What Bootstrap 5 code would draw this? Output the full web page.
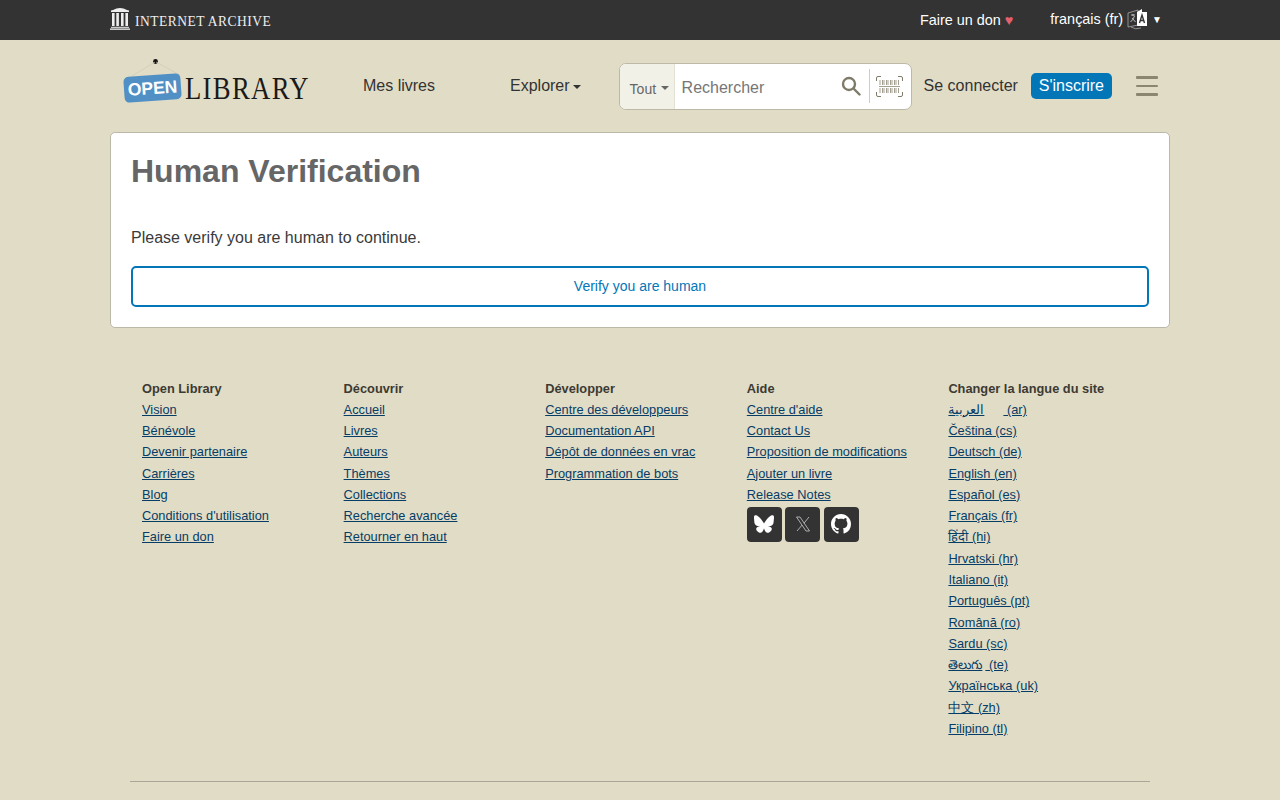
<!DOCTYPE html>
<html lang="fr">
<head>
    <meta charset="UTF-8">
    <meta name="viewport" content="width=device-width, initial-scale=1.0">
    <title>Human Verification | Open Library</title>
    <link href="https://cdn.jsdelivr.net/npm/bootstrap@5.3.0/dist/css/bootstrap.min.css" rel="stylesheet" />
    <style>
        body { background: #e1dcc5; color: #333; font-family: "Liberation Sans", Arial, sans-serif; font-size: 16px; }
        .page-wrap { width: 1060px; margin: 0 auto; }
        .ia-bar { background: #333; height: 40px; color: #fff; }
        .ia-bar .page-wrap { height: 40px; }
        .ia-mark { margin-top: -4px; }
        .ia-name { font-family: "Liberation Serif", serif; font-size: 15px; letter-spacing: .55px; color: #eee; margin-left: 5px; padding-top: 2px; transform: scaleX(.9); transform-origin: left center; white-space: nowrap; }
        .ia-link { font-size: 14.4px; color: #fff; text-decoration: none; margin-top: 1px; }
        .ia-heart { color: #e4606d; }
        .lang-pick { font-size: 14.4px; margin-left: 37px; margin-right: 8px; margin-top: -1px; }
        .lang-icon { margin-left: 4px; }
        .lang-arrow { font-size: 10px; margin-left: 4px; }
        .ol-head { height: 92px; }
        .ol-logo { width: 203px; height: 60px; margin-left: 13px; position: relative; flex: none; }
        .ol-sign { position: absolute; left: 1px; top: 19px; width: 57px; height: 26px; background: #5090c5; border-radius: 5px; transform: rotate(-4deg); color: #fff; font-weight: 700; font-size: 17.5px; line-height: 26px; text-align: center; }
        .ol-word { position: absolute; left: 62px; top: 15px; font-family: "Liberation Serif", serif; font-size: 30.5px; letter-spacing: 1.5px; color: #1a1a1a; line-height: 36px; transform: scaleX(.875); transform-origin: left center; }
        .ol-hook { position: absolute; left: 0; top: 3px; }
        .head-link { color: #333; text-decoration: none; }
        .search-box { width: 293px; height: 47px; border: 1px solid #bdb9a6; border-radius: 7px; background: #fff; margin-left: 38px; overflow: hidden; flex: none; }
        .search-scope { width: 55px; background: #f2f1e8; border-right: 1px solid #e4e2d5; color: #666; font-size: 14px; padding: 6px 0 0 10px; }
        .search-scope::after { content: ""; display: inline-block; border-top: 4px solid currentColor; border-left: 4px solid transparent; border-right: 4px solid transparent; margin: -3px 0 0 5px; }
        .caret-down::after { content: ""; display: inline-block; border-top: 4px solid currentColor; border-left: 4px solid transparent; border-right: 4px solid transparent; vertical-align: middle; margin-left: 3px; }
        .search-input { border: 0; outline: 0; flex: 1; min-width: 0; padding: 3px 0 0 7px; font-size: 16px; background: transparent; color: #333; }
        .search-input::placeholder { color: #767676; opacity: 1; }
        .search-sep { width: 1px; height: 34px; background: #ccc; margin: 0 6px 0 8px; }
        .signup { background: #0376b8; color: #fff; border: 0; border-radius: 5px; height: 26px; width: 81px; padding: 0; font-size: 16px; line-height: 26px; }
        .signup:hover { background: #0376b8; color: #fff; }
        .burger { width: 22px; margin-left: 24px; }
        .burger span { display: block; height: 2.500px; background: #8a8670; margin: 6px 0; border-radius: 1px; }
        .verify-card { border: 1px solid #bbb8a8; border-radius: 5px; height: 196px; padding: 20px; margin-top: 0; }
        .verify-card h1 { font-size: 32px; font-weight: 700; color: #666; line-height: 37px; margin: 0 0 39px; }
        .verify-card p { font-size: 16px; line-height: 18px; margin: 0 0 20px; color: #3a3a3a; }
        .verify-btn { display: block; width: 100%; height: 41px; border: 2px solid #0376b8; border-radius: 5px; background: #fff; color: #0376b8; font-size: 14px; padding: 0; margin-top: -1px; }
        .verify-btn:hover { background: #fff; color: #0376b8; border-color: #0376b8; }
        .foot { width: 1020px; margin: 49.47px auto 0; }
        .foot-cols { padding-left: 12px; display: grid; grid-template-columns: repeat(5, 201.6px); font-size: 12.8px; line-height: 21.28px; }
        .foot-cols h2 { font-size: 12.8px; font-weight: 700; line-height: 21.28px; margin: 0 0 -.6px; padding-top: .6px; color: #3c3a33; }
        .foot-cols a { color: #063d66; }
        .foot-cols ul { margin: 0; padding: 0; list-style: none; }
        .social-row { margin-top: 1.500px; }
        .social { width: 35px; height: 35px; background: #333; border-radius: 4px; margin-right: 3.500px; }
        .arabic-name { padding-right: 19px; }
        .telugu-name { padding-right: 3px; }
        .foot-rule { border: 0; border-top: 1px solid #aaa79a; opacity: 1; margin: 41.900px 0 30px; }
    </style>
</head>
<body>
    <div class="ia-bar">
        <div class="page-wrap d-flex align-items-center justify-content-between">
            <div class="d-flex align-items-center">
                <svg class="ia-mark" width="20" height="23" viewBox="0 0 20 23" fill="#eee" aria-hidden="true">
                    <path d="M3 3 Q10 -1 17 3 L19 3.500 V5 H1 V3.500 Z"/>
                    <rect x="2" y="6" width="2.600" height="13"/>
                    <rect x="6.300" y="6" width="2.600" height="13"/>
                    <rect x="11" y="6" width="2.600" height="13"/>
                    <rect x="15.400" y="6" width="2.600" height="13"/>
                    <rect x="1" y="19.800" width="18" height="1"/>
                    <rect x="0" y="21.500" width="20" height="1.300"/>
                </svg>
                <span class="ia-name">INTERNET ARCHIVE</span>
            </div>
            <div class="d-flex align-items-center">
                <a class="ia-link" href="#">Faire un don <span class="ia-heart">♥</span></a>
                <span class="lang-pick d-flex align-items-center">français (fr)
                    <svg class="lang-icon" width="21" height="22" viewBox="0 0 21 22" aria-hidden="true">
                        <path d="M1 5 L11 2 V17 L1 19 Z" fill="none" stroke="#aaa" stroke-width=".8"/>
                        <path d="M10 4 L15 1 V4 H20 V18 H10 Z" fill="#fff"/>
                        <path d="M12.500 15 L15 7 L17.500 15 M13.400 12.500 H16.600" fill="none" stroke="#333" stroke-width="1.400"/>
                        <path d="M4 7 H8 M6 6 V8 M7.500 8 Q6 12 3.500 14 M5 10 L8.500 14" fill="none" stroke="#ccc" stroke-width=".9"/>
                        <path d="M4 19 Q8 22 14 20" fill="none" stroke="#aaa" stroke-width=".8"/>
                    </svg>
                    <span class="lang-arrow">▼</span>
                </span>
            </div>
        </div>
    </div>

    <div class="page-wrap">
        <header class="ol-head d-flex align-items-center">
            <a class="ol-logo d-block text-decoration-none" href="#">
                <svg class="ol-hook" width="70" height="40" viewBox="0 0 70 40" aria-hidden="true">
                    <circle cx="32.500" cy="2.500" r="2.400" fill="#111"/>
                    <path d="M32 3 L9 17 M33 3 L57 16" stroke="#cfcab4" stroke-width=".7" fill="none"/>
                </svg>
                <span class="ol-sign">OPEN</span>
                <span class="ol-word">LIBRARY</span>
            </a>
            <a class="head-link" style="margin-left:37px" href="#">Mes livres</a>
            <a class="head-link caret-down" style="margin-left:75px" href="#">Explorer</a>
            <form class="search-box d-flex align-items-stretch" onsubmit="return false">
                <div class="search-scope d-flex align-items-center text-nowrap">Tout</div>
                <input class="search-input" type="text" placeholder="Rechercher">
                <div class="d-flex align-items-center">
                    <svg width="20" height="20" viewBox="0 0 20 20" fill="none" stroke="#7f7b69" stroke-width="2.400" aria-hidden="true">
                        <circle cx="8" cy="8" r="6"/>
                        <path d="M12.500 12.500 L18.500 18.500" stroke-linecap="round"/>
                    </svg>
                    <div class="search-sep"></div>
                    <svg class="me-2" width="27" height="21" viewBox="0 0 27 21" fill="none" aria-hidden="true">
                        <path d="M.5 5 V2 Q.5 .5 2 .5 H5 M22 .5 H25 Q26.500 .5 26.500 2 V5 M.5 16 V19 Q.5 20.500 2 20.500 H5 M22 20.500 H25 Q26.500 20.500 26.500 19 V16" stroke="#7f7b69"/>
                        <path d="M3 10.500 H24" stroke="#a5a292" stroke-width="1"/>
                        <path d="M4 4 V9 M6.500 4 V9 M8 4 V9 M10.500 4 V9 M12 4 V9 M14.500 4 V9 M16 4 V9 M18.500 4 V9 M20 4 V9 M22.500 4 V9 M4 12 V17 M6.500 12 V17 M8 12 V17 M10.500 12 V17 M12 12 V17 M14.500 12 V17 M16 12 V17 M18.500 12 V17 M20 12 V17 M22.500 12 V17" stroke="#8a8674" stroke-width=".8"/>
                    </svg>
                </div>
            </form>
            <a class="head-link" style="margin-left:12px" href="#">Se connecter</a>
            <a class="btn signup" style="margin-left:13px" href="#">S'inscrire</a>
            <div class="burger"><span></span><span></span><span></span></div>
        </header>

        <main class="card verify-card">
            <h1>Human Verification</h1>
            <p>Please verify you are human to continue.</p>
            <button class="btn verify-btn" type="button">Verify you are human</button>
        </main>
    </div>

    <footer class="foot">
        <div class="foot-cols">
            <div>
                <h2>Open Library</h2>
                <ul>
                    <li><a href="#">Vision</a></li>
                    <li><a href="#">Bénévole</a></li>
                    <li><a href="#">Devenir partenaire</a></li>
                    <li><a href="#">Carrières</a></li>
                    <li><a href="#">Blog</a></li>
                    <li><a href="#">Conditions d'utilisation</a></li>
                    <li><a href="#">Faire un don</a></li>
                </ul>
            </div>
            <div>
                <h2>Découvrir</h2>
                <ul>
                    <li><a href="#">Accueil</a></li>
                    <li><a href="#">Livres</a></li>
                    <li><a href="#">Auteurs</a></li>
                    <li><a href="#">Thèmes</a></li>
                    <li><a href="#">Collections</a></li>
                    <li><a href="#">Recherche avancée</a></li>
                    <li><a href="#">Retourner en haut</a></li>
                </ul>
            </div>
            <div>
                <h2>Développer</h2>
                <ul>
                    <li><a href="#">Centre des développeurs</a></li>
                    <li><a href="#">Documentation API</a></li>
                    <li><a href="#">Dépôt de données en vrac</a></li>
                    <li><a href="#">Programmation de bots</a></li>
                </ul>
            </div>
            <div>
                <h2>Aide</h2>
                <ul>
                    <li><a href="#">Centre d'aide</a></li>
                    <li><a href="#">Contact Us</a></li>
                    <li><a href="#">Proposition de modifications</a></li>
                    <li><a href="#">Ajouter un livre</a></li>
                    <li><a href="#">Release Notes</a></li>
                </ul>
                <div class="social-row d-flex">
                    <a class="social d-flex align-items-center justify-content-center" href="#" aria-label="Bluesky">
                        <svg width="20" height="20" viewBox="0 0 16 16" fill="#fff"><path d="M3.468 1.948C5.303 3.325 7.276 6.118 8 7.616c.725-1.498 2.698-4.29 4.532-5.668C13.855.955 16 .186 16 2.632c0 .489-.28 4.105-.444 4.692-.572 2.04-2.653 2.561-4.504 2.246 3.236.551 4.06 2.375 2.281 4.2-3.376 3.464-4.852-.87-5.23-1.98-.07-.204-.103-.3-.103-.218 0-.081-.033.014-.102.218-.379 1.11-1.855 5.444-5.231 1.98-1.778-1.825-.955-3.65 2.28-4.2-1.85.315-3.932-.205-4.503-2.246C.28 6.737 0 3.12 0 2.632 0 .186 2.145.955 3.468 1.948Z"/></svg>
                    </a>
                    <a class="social d-flex align-items-center justify-content-center" href="#" aria-label="X">
                        <svg width="16" height="16" viewBox="0 0 16 16" fill="none" stroke="#ccc" stroke-width=".8"><path d="M1.500 1 H5 L14.500 15 H11 Z M14 1 L9 7.200 M7 9.200 L2 15"/></svg>
                    </a>
                    <a class="social d-flex align-items-center justify-content-center" href="#" aria-label="GitHub">
                        <svg width="20" height="20" viewBox="0 0 16 16" fill="#fff"><path d="M8 0C3.58 0 0 3.58 0 8c0 3.54 2.29 6.53 5.47 7.59.4.07.55-.17.55-.38 0-.19-.01-.82-.01-1.49-2.01.37-2.53-.49-2.69-.94-.09-.23-.48-.94-.82-1.13-.28-.15-.68-.52-.01-.53.63-.01 1.08.58 1.23.82.72 1.21 1.87.87 2.33.66.07-.52.28-.87.51-1.07-1.78-.2-3.64-.89-3.64-3.95 0-.87.31-1.59.82-2.15-.08-.2-.36-1.02.08-2.12 0 0 .67-.21 2.2.82.64-.18 1.32-.27 2-.27.68 0 1.36.09 2 .27 1.53-1.04 2.2-.82 2.2-.82.44 1.1.16 1.92.08 2.12.51.56.82 1.27.82 2.15 0 3.07-1.87 3.75-3.65 3.95.29.25.54.73.54 1.48 0 1.07-.01 1.93-.01 2.2 0 .21.15.46.55.38A8.012 8.012 0 0 0 16 8c0-4.42-3.58-8-8-8z"/></svg>
                    </a>
                </div>
            </div>
            <div>
                <h2>Changer la langue du site</h2>
                <ul>
                    <li><a href="#"><span class="arabic-name">العربية</span> (ar)</a></li>
                    <li><a href="#">Čeština (cs)</a></li>
                    <li><a href="#">Deutsch (de)</a></li>
                    <li><a href="#">English (en)</a></li>
                    <li><a href="#">Español (es)</a></li>
                    <li><a href="#">Français (fr)</a></li>
                    <li><a href="#">हिंदी (hi)</a></li>
                    <li><a href="#">Hrvatski (hr)</a></li>
                    <li><a href="#">Italiano (it)</a></li>
                    <li><a href="#">Português (pt)</a></li>
                    <li><a href="#">Română (ro)</a></li>
                    <li><a href="#">Sardu (sc)</a></li>
                    <li><a href="#"><span class="telugu-name">తెలుగు</span> (te)</a></li>
                    <li><a href="#">Українська (uk)</a></li>
                    <li><a href="#">中文 (zh)</a></li>
                    <li><a href="#">Filipino (tl)</a></li>
                </ul>
            </div>
        </div>
        <hr class="foot-rule">
    </footer>
    <script src="https://cdn.jsdelivr.net/npm/bootstrap@5.3.0/dist/js/bootstrap.bundle.min.js"></script>
</body>
</html>
